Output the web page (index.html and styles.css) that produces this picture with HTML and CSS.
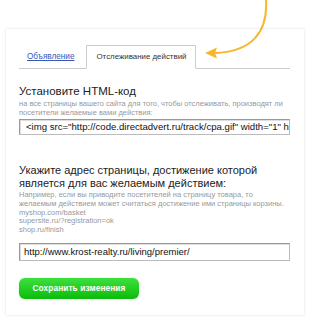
FILE: index.html
```html
<!DOCTYPE html>
<html>
<head>
<meta charset="utf-8">
<link rel="stylesheet" href="styles.css">
</head>
<body>
<svg class="arrow" width="310" height="70" viewBox="0 0 310 70">
  <path d="M266 0 C268 32 252 52 214 53" fill="none" stroke="#f8b62a" stroke-width="2"/>
  <polygon points="205,53 217,47.5 215,53 217,58.5" fill="#f8b62a"/>
</svg>
<div class="card">
  <div class="tabs">
    <a class="tab-link" href="#">Объявление</a>
    <div class="tab-active">Отслеживание действий</div>
  </div>
  <h2 class="h1">Установите HTML-код</h2>
  <p class="hint">на все страницы вашего сайта для того, чтобы отслеживать, производят ли посетители желаемые вами действия:</p>
  <div class="field">&lt;img src="http://code.directadvert.ru/track/cpa.gif" width="1" height="1"&gt;</div>
  <h2 class="h2">Укажите адрес страницы, достижение которой является для вас желаемым действием:</h2>
  <p class="hint2">Например, если вы приводите посетителей на страницу товара, то желаемым действием может считаться достижение ими страницы корзины.<br>myshop.com/basket<br>supersite.ru/?registration=ok<br>shop.ru/finish</p>
  <div class="field field2">http://www.krost-realty.ru/living/premier/</div>
  <button class="btn">Сохранить изменения</button>
</div>
</body>
</html>
```
FILE: styles.css
```css
html, body { margin: 0; padding: 0; background: #fff; }
body { width: 310px; height: 322px; overflow: hidden; position: relative; font-family: "Liberation Sans", Arial, sans-serif; color: #333; }
.arrow { position: absolute; left: 0; top: 0; z-index: 2; }
.card {
  margin: 29px 6px 0;
  height: 286px;
  box-sizing: border-box;
  padding: 16px 14px 0 13px;
  box-shadow: 0 0 3px rgba(0,0,0,0.13);
  background: #fff;
}
.tabs { display: flex; align-items: flex-end; height: 24px; border-bottom: 1px solid #ccc; box-sizing: border-box; }
.tab-link { font-size: 8.2px; color: #3b57b6; text-decoration: underline; padding: 0 12px 0 8px; line-height: 23px; }
.tab-active { font-size: 7.9px; color: #333; line-height: 22px; padding: 0 8px 0 9px; border: 1px solid #ccc; border-bottom: 1px solid #fff; margin-bottom: -1px; background: #fff; }
.h1 { margin: 15px 0 0; font-size: 11.5px; font-weight: normal; color: #222; line-height: 14px; }
.hint { margin: 2px 0 0; font-size: 7.5px; color: #999; line-height: 8.5px; }
.field {
  margin-top: 2px; height: 16px; box-sizing: border-box; border: 1px solid #bbb; border-top-color: #999; border-left-color: #999;
  box-shadow: inset 1px 1px 0 #ddd;
  font-size: 9.6px; line-height: 14px; padding: 0 0 0 6px; white-space: nowrap; overflow: hidden; color: #111;
}
.h2 { margin: 29px 0 0; font-size: 11px; font-weight: normal; color: #222; line-height: 13px; }
.hint2 { margin: 1px 0 0; font-size: 7.5px; color: #999; line-height: 8.8px; }
.field2 { margin-top: 8px; height: 18px; line-height: 16px; font-size: 9.5px; padding-left: 4px; }
.btn {
  display: block; margin-top: 17px; width: 120px; height: 21px; border: 0; border-radius: 6px;
  background: linear-gradient(#3ee03e, #0bbb0b); color: #fff; font-family: "Liberation Sans", Arial, sans-serif;
  font-weight: bold; font-size: 8.3px; letter-spacing: 0.1px; padding: 0; box-shadow: 0 0 1px #7c7;
}
```
